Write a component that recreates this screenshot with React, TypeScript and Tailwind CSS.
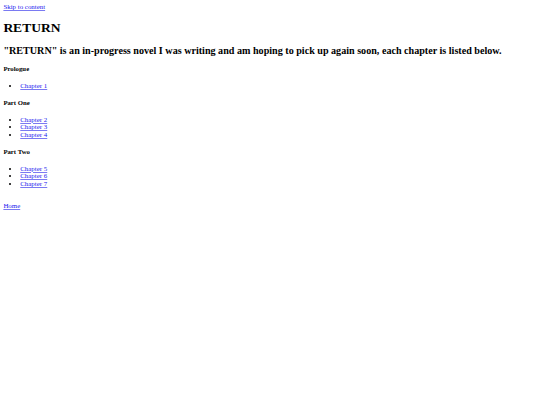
export default function App() {
  const link = "text-[#1a1aee] underline decoration-[#7a7af2]";
  const h4 = "text-[6.75px] leading-[7.76px] font-bold my-[8.98px]";
  const ul = "list-disc pl-[16.9px] my-[6.75px]";
  return (
    <div className="min-h-[405px] bg-white text-black font-['Liberation_Serif',serif] text-[6.9px] leading-[7.76px]">
      <div className="p-[3.375px]">
        <a href="#content" className={link}>Skip to content</a>
        <h1 className="text-[13.5px] leading-[15.5px] font-bold my-[9.05px]">RETURN</h1>
        <h2 className="text-[10.125px] leading-[11.65px] font-bold my-[8.4px]">
          "RETURN" is an in-progress novel I was writing and am hoping to pick up again soon, each chapter is listed below.
        </h2>
        <h4 className={h4}>Prologue</h4>
        <ul className={ul}>
          <li><a href="#" className={link}>Chapter 1</a></li>
        </ul>
        <h4 className={h4}>Part One</h4>
        <ul className={ul}>
          <li><a href="#" className={link}>Chapter 2</a></li>
          <li><a href="#" className={link}>Chapter 3</a></li>
          <li><a href="#" className={link}>Chapter 4</a></li>
        </ul>
        <h4 className={h4}>Part Two</h4>
        <ul className={ul}>
          <li><a href="#" className={link}>Chapter 5</a></li>
          <li><a href="#" className={link}>Chapter 6</a></li>
          <li><a href="#" className={link}>Chapter 7</a></li>
        </ul>
        <p className="mt-[13.8px]">
          <a href="#" className={link}>Home</a>
        </p>
      </div>
    </div>
  );
}
